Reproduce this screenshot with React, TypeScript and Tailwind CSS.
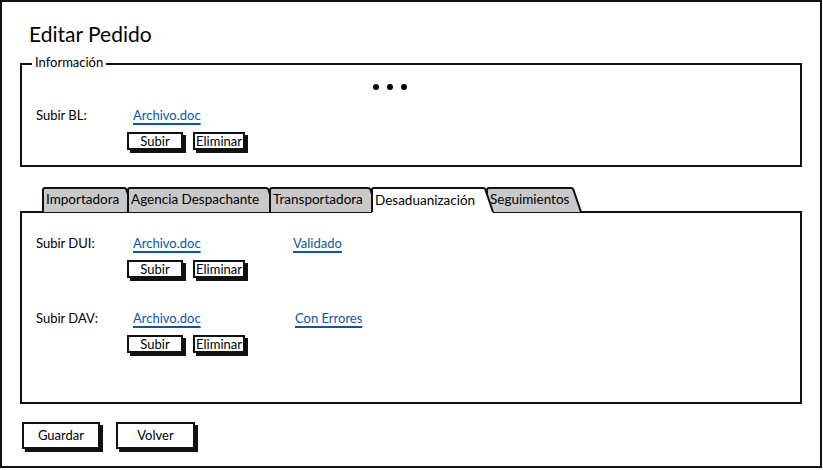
import React from "react";

const Btn = ({ label, w, h = "h-[18px]" }: { label: string; w: string; h?: string }) => (
  <div
    className={`${w} ${h} border-2 border-[#111] bg-white shadow-[3px_3px_0_#111] text-[13px] leading-none flex items-center justify-center text-black`}
  >
    {label}
  </div>
);

const Link = ({ children }: { children: React.ReactNode }) => (
  <span className="text-[#0d56a3] underline decoration-[1.5px] underline-offset-[3px]">{children}</span>
);

const Upload = ({
  label,
  status,
  statusPad = "",
  mt,
}: {
  label: string;
  status?: string;
  statusPad?: string;
  mt: string;
}) => (
  <div className={`flex flex-col ${mt}`}>
    <div className="flex h-[16px] items-center text-[13px] leading-[16px]">
      <div className="w-[111px] pl-[14px] text-black">{label}</div>
      <div className="w-[160px]">
        <Link>Archivo.doc</Link>
      </div>
      {status && (
        <div className={statusPad}>
          <Link>{status}</Link>
        </div>
      )}
    </div>
    <div className="flex gap-[10px] ml-[105px] mt-[9px]">
      <Btn label="Subir" w="w-[56px]" />
      <Btn label="Eliminar" w="w-[52px]" />
    </div>
  </div>
);

type TabDef = { label: string; w: number; selected?: boolean };

const tabs: TabDef[] = [
  { label: "Importadora", w: 85 },
  { label: "Agencia Despachante", w: 142 },
  { label: "Transportadora", w: 102 },
  { label: "Desaduanización", w: 115, selected: true },
  { label: "Seguimientos", w: 88 },
];

const Tab = ({ t, z }: { t: TabDef; z: number }) => {
  const W = t.w;
  const outline = `M1,25 L1,3 Q1,1 3,1 L${W - 3},1 Q${W - 1},1 ${W - 0.5},3 L${W + 7},25`;
  const fillPath = t.selected
    ? `M1,27 L1,3 Q1,1 3,1 L${W - 3},1 Q${W - 1},1 ${W - 0.5},3 L${W + 7},25 L${W + 7},27 Z`
    : `M1,25 L1,3 Q1,1 3,1 L${W - 3},1 Q${W - 1},1 ${W - 0.5},3 L${W + 7},25 Z`;
  return (
    <div className="relative h-[24px] shrink-0" style={{ width: W, zIndex: z }}>
      <svg
        className="absolute left-0 top-0 overflow-visible"
        width={W + 8}
        height={27}
        viewBox={`0 0 ${W + 8} 27`}
      >
        <path d={fillPath} fill={t.selected ? "#ffffff" : "#c9c9c9"} />
        <path d={outline} fill="none" stroke="#111" strokeWidth={2} strokeLinejoin="round" />
      </svg>
      <div
        className={`relative flex h-full items-center pl-[4px] text-[13.5px] leading-none text-black whitespace-nowrap ${
          t.selected ? "pt-[4px]" : "pt-[1px]"
        }`}
      >
        {t.label}
      </div>
    </div>
  );
};

export default function App() {
  return (
    <div className="w-[823px] h-[470px] bg-white font-['Lato',sans-serif] text-black">
      <div className="w-[822px] h-[468px] border-2 border-[#111] flex flex-col">
        <div className="pl-[27px] pt-[20px] h-[46px] text-[21px] leading-[24px]">Editar Pedido</div>

        {/* Información */}
        <div className="relative ml-[18px] mt-[15px] w-[782px] h-[104px] border-2 border-[#111]">
          <div className="absolute left-[10px] -top-[10px] bg-white px-[3px] text-[13px] leading-[14px]">
            Información
          </div>
          <div className="flex gap-[8px] ml-[351px] mt-[19px]">
            <div className="w-[6px] h-[6px] rounded-full bg-black" />
            <div className="w-[6px] h-[6px] rounded-full bg-black" />
            <div className="w-[6px] h-[6px] rounded-full bg-black" />
          </div>
          <Upload label="Subir BL:" mt="mt-[17px]" />
        </div>

        {/* Tabs */}
        <div className="relative flex ml-[40px] mt-[20px] h-[24px] z-10">
          {tabs.map((t, i) => (
            <Tab key={t.label} t={t} z={t.selected ? 20 : i + 1} />
          ))}
        </div>
        <div className="ml-[18px] w-[782px] h-[193px] border-2 border-[#111] flex flex-col">
          <Upload label="Subir DUI:" status="Validado" mt="mt-[22px]" />
          <Upload label="Subir DAV:" status="Con Errores" statusPad="pl-[2px]" mt="mt-[32px]" />
        </div>

        <div className="flex gap-[16px] ml-[20px] mt-[18px]">
          <Btn label="Guardar" w="w-[78px]" h="h-[27px]" />
          <Btn label="Volver" w="w-[79px]" h="h-[27px]" />
        </div>
      </div>
    </div>
  );
}
